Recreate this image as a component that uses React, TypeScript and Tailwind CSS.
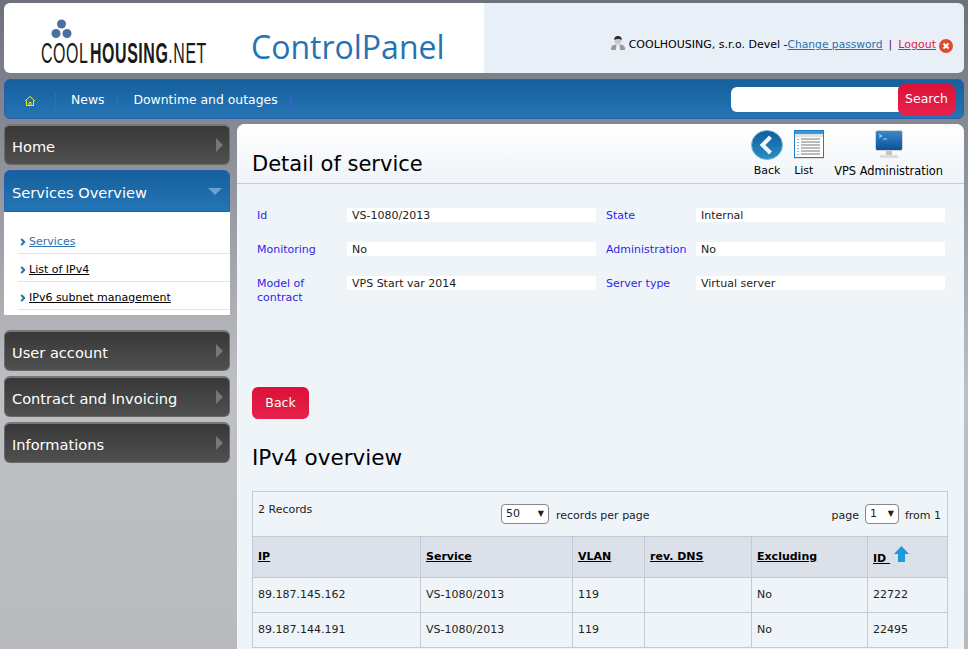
import { ChevronRight } from 'lucide-react';

const font = "font-['DejaVu_Sans',sans-serif]";

function Logo() {
  return (
    <div className="relative w-[170px] h-[46px]">
      <svg className="absolute left-[10px] -top-[1px]" width="24" height="24" viewBox="0 0 24 24">
        <circle cx="10.5" cy="5" r="4.5" fill="#4a6fa5" />
        <circle cx="5" cy="14.5" r="4.5" fill="#4a6fa5" />
        <circle cx="16" cy="14.5" r="4.5" fill="#4a6fa5" />
      </svg>
      <div className="absolute left-0 top-[18px] flex items-baseline whitespace-nowrap origin-left scale-x-[0.55] font-['Liberation_Sans',sans-serif] text-[29px] leading-[30px] text-[#1a1a1a] tracking-[1px]">
        <span>COOL</span>
        <span className="font-bold ml-[3px]">HOUSING</span>
        <span>.NET</span>
      </div>
    </div>
  );
}

function MenuButton({ label }: { label: string }) {
  return (
    <div className="h-[41px] rounded-md border border-[#6a6a6a] border-t-2 border-t-[#777] bg-gradient-to-b from-[#383838] to-[#505050] flex items-center justify-between pl-[7px] pr-[6px] text-white text-[14.6px]">
      <span className="mt-[4px]">{label}</span>
      <span className="w-0 h-0 border-y-[7px] border-y-transparent border-l-[7px] border-l-[#777]" />
    </div>
  );
}

function SubLink({ label, active }: { label: string; active?: boolean }) {
  return (
    <div className="h-[28px] ml-[14px] pt-[5px] border-b border-[#e0e3ea] flex items-center gap-[1px] text-[11px]">
      <ChevronRight size={10} strokeWidth={5} className="text-[#2a72ad] shrink-0" />
      <span className={active ? 'underline text-[#2a72ad]' : 'underline text-black'}>{label}</span>
    </div>
  );
}

function Field({ label, value }: { label: string; value: string }) {
  return (
    <div className="flex items-start">
      <div className="w-[95px] shrink-0 pl-[5px] pr-2 pt-[1px] text-[11px] leading-[14px] text-[#2f1fe8]">{label}</div>
      <div className="w-[249px] h-[14px] bg-white pl-[5px] text-[11px] leading-[16px] text-[#222]">{value}</div>
    </div>
  );
}

function Th({ label, width }: { label: string; width: string }) {
  return (
    <th className={`${width} border border-[#c3c9d6] px-[5px] text-left text-[11px] font-bold underline text-black`}>
      {label}
    </th>
  );
}

function Row({ ip, id }: { ip: string; id: string }) {
  const td = 'border border-[#c3c9d6] px-[5px] text-[11px] text-[#222]';
  return (
    <tr className="h-[35px]">
      <td className={td}>{ip}</td>
      <td className={td}>VS-1080/2013</td>
      <td className={td}>119</td>
      <td className={td}></td>
      <td className={td}>No</td>
      <td className={td}>{id}</td>
    </tr>
  );
}

export default function App() {
  return (
    <div className={`${font} h-[649px] w-[968px] overflow-hidden bg-gradient-to-b from-[#6c717c] via-[#bfc0c4] via-60% to-[#b9babd] pt-[3px] px-[4px]`}>
      {/* Header */}
      <header className="h-[70px] flex rounded-md overflow-hidden">
        <div className="w-[480px] bg-white flex items-start pl-[37px] pt-[17px]">
          <Logo />
          <div className="ml-[40px] mt-[7px] text-[#2573b5] text-[32px] leading-[40px] font-['Open_Sans',sans-serif]">ControlPanel</div>
        </div>
        <div className="flex-1 bg-[#e8eff7] flex items-center justify-end gap-[3px] pr-[11px] pt-[15px] text-[11px]">
          <svg width="14" height="16" viewBox="0 0 14 16" className="mb-[5px]">
            <path d="M0 15c0-4 1-5.500 7-5.500s7 1.500 7 5.500z" fill="#9a9a9a" />
            <path d="M5.500 9.500h3l.5 5.500H5z" fill="#f2f2f2" />
            <circle cx="7" cy="5.500" r="3.500" fill="#c8c8c8" />
            <path d="M3.300 5C3 2 5 1 7 1s4 1 3.700 4C9.500 3.500 4.500 3.500 3.300 5z" fill="#2c2c2c" />
          </svg>
          <span className="text-black ml-[1px]">COOLHOUSING, s.r.o. Devel -</span>
          <span className="underline text-[#2a72ad] text-[10.7px] -ml-[3px]">Change password</span>
          <span className="text-[#601060] mx-[3px]">|</span>
          <span className="underline text-[#e01c44]">Logout</span>
          <svg width="14" height="14" viewBox="0 0 14 14">
            <circle cx="7" cy="7" r="7" fill="#dd4b30" />
            <path d="M4.500 4.500l5 5M9.500 4.500l-5 5" stroke="#fff" strokeWidth="2" />
          </svg>
        </div>
      </header>

      {/* Top nav */}
      <nav className="mt-[6px] h-[40px] rounded-md border border-[#2a5fb0] bg-gradient-to-b from-[#15609d] to-[#2575b5] flex items-center text-white text-[12.4px]">
        <div className="w-[51px] mt-[3px] flex justify-center h-[16px] items-center border-r border-[#3b66cc]">
          <svg width="12" height="12" viewBox="0 0 12 12" fill="none" stroke="#ffee00" strokeWidth="1">
            <path d="M1 6l5-4.500 5 4.500M2.500 5.500v5h7v-5M5 10.500v-3h2v3" />
          </svg>
        </div>
        <div className="pl-[15px] pr-[13px] mt-[3px] h-[16px] flex items-center border-r border-[#3b66cc]">News</div>
        <div className="pl-[15px] pr-[12px] mt-[3px] h-[16px] flex items-center border-r border-[#3b66cc]">Downtime and outages</div>
        <div className="ml-auto flex items-center mr-[8px]">
          <div className="w-[170px] h-[25px] bg-white rounded-l-md -mr-[3px]" />
          <button className="relative w-[57px] h-[31px] rounded-md bg-gradient-to-b from-[#db1038] to-[#e7214a] text-white text-[12.5px]">Search</button>
        </div>
      </nav>

      <div className="mt-[5px] flex gap-[7px] items-start">
        {/* Sidebar */}
        <aside className="w-[226px] shrink-0 flex flex-col">
          <MenuButton label="Home" />
          <div className="mt-[5px] h-[42px] rounded-t-md border border-[#2a5fb0] bg-gradient-to-b from-[#15609d] to-[#2575b5] flex items-center justify-between pl-[7px] pr-[7px] text-white text-[14.6px]">
            <span className="mt-[4px]">Services Overview</span>
            <span className="w-0 h-0 border-x-[7px] border-x-transparent border-t-[7px] border-t-[#6ba0cf]" />
          </div>
          <div className="bg-white h-[103px] pt-[14px]">
            <SubLink label="Services" active />
            <SubLink label="List of IPv4" />
            <SubLink label="IPv6 subnet management" />
          </div>
          <div className="mt-[15px] flex flex-col gap-[5px]">
            <MenuButton label="User account" />
            <MenuButton label="Contract and Invoicing" />
            <MenuButton label="Informations" />
          </div>
        </aside>

        {/* Main */}
        <main className="w-[727px] h-[525px] rounded-t-lg bg-[#eff4f9] overflow-hidden">
          <div className="h-[60px] border-b border-[#c5cad6] bg-gradient-to-b from-white to-[#eff4f9] flex items-end justify-between pl-[15px] pr-[21px]">
            <h1 className="text-[21px] leading-[32px] text-black mb-[3px]">Detail of service</h1>
            <div className="flex items-end text-[11px] text-black leading-[14px] mb-[5px]">
              <div className="w-[32px] flex flex-col items-center gap-[4px]">
                <svg width="32" height="30" viewBox="0 0 32 30">
                  <defs>
                    <linearGradient id="backFill" x1="0" y1="0" x2="0" y2="1">
                      <stop offset="0" stopColor="#0b5d9c" />
                      <stop offset="1" stopColor="#2b8fc6" />
                    </linearGradient>
                  </defs>
                  <ellipse cx="16" cy="15" rx="15.500" ry="14.500" fill="url(#backFill)" stroke="#7fb2d2" strokeWidth="1" />
                  <path d="M19.500 7l-8 8 8 8" fill="none" stroke="#f2f8fc" strokeWidth="4" />
                </svg>
                <span>Back</span>
              </div>
              <div className="ml-[11px] w-[30px] flex flex-col items-start gap-[4px]">
                <svg width="30" height="30" viewBox="0 0 30 30">
                  <rect x="0" y="1" width="30" height="28" fill="#ccc" opacity=".5" />
                  <rect x=".5" y=".5" width="29" height="27" fill="#fff" stroke="#1e7fc0" />
                  <rect x="1" y="1" width="28" height="3" fill="#3f97d8" />
                  <rect x="1" y="4" width="28" height="3" fill="#dfe3e6" />
                  <path d="M7 9h19M7 12h19M7 15h19M7 18h19M7 21h19M7 24h19" stroke="#777" />
                  <path d="M4 9v16" stroke="#1e6fa8" strokeDasharray="1 2" />
                </svg>
                <span>List</span>
              </div>
              <div className="ml-[10px] flex flex-col items-center gap-[4px] text-[11.4px]">
                <svg width="30" height="30" viewBox="0 0 30 30">
                  <defs>
                    <linearGradient id="vpsFill" x1="0" y1="0" x2="0" y2="1">
                      <stop offset="0" stopColor="#3a8ccc" />
                      <stop offset="1" stopColor="#0b4f94" />
                    </linearGradient>
                  </defs>
                  <rect x="1.500" y="0.500" width="27" height="20" rx="2" fill="url(#vpsFill)" stroke="#d5d5d5" />
                  <path d="M5 4.500l3 1.500-3 1.500M9 9h4" stroke="#e0f0ff" fill="none" strokeWidth=".8" />
                  <rect x="12" y="21" width="6" height="4" fill="#c4c4c4" />
                  <rect x="6" y="25" width="18" height="3" rx="1" fill="#dcdcdc" />
                </svg>
                <span>VPS Administration</span>
              </div>
            </div>
          </div>

          <div className="px-[15px]">
            <div className="mt-[24px] grid grid-cols-[344px_344px] gap-x-[5px] gap-y-[19px]">
              <Field label="Id" value="VS-1080/2013" />
              <Field label="State" value="Internal" />
              <Field label="Monitoring" value="No" />
              <Field label="Administration" value="No" />
              <Field label="Model of contract" value="VPS Start var 2014" />
              <Field label="Server type" value="Virtual server" />
            </div>

            <button className="mt-[82px] block w-[57px] h-[32px] rounded-md bg-gradient-to-b from-[#db1038] to-[#e7214a] text-white text-[12.5px]">Back</button>

            <h2 className="mt-[23px] text-[21.5px] leading-[32px] text-black">IPv4 overview</h2>

            <div className="mt-[17px] w-[696px] h-[45px] border border-[#c3c9d6] border-b-0 flex text-[11px] text-[#222]">
              <div className="w-[248px] pl-[5px] pt-[10px]">2 Records</div>
              <div className="flex items-start pt-[12px] gap-[7px]">
                <div className="w-[48px] h-[20px] bg-white border border-[#888] rounded-sm flex items-center justify-between px-[4px]">
                  <span>50</span>
                  <span className="text-[8px]">▼</span>
                </div>
                <span className="mt-[4px]">records per page</span>
              </div>
              <div className="ml-auto flex items-start pt-[12px] gap-[6px] pr-[6px]">
                <span className="mt-[4px]">page</span>
                <div className="w-[34px] h-[20px] bg-white border border-[#888] rounded-sm flex items-center justify-between px-[4px]">
                  <span>1</span>
                  <span className="text-[8px]">▼</span>
                </div>
                <span className="mt-[4px]">from 1</span>
              </div>
            </div>

            <table className="w-[696px] table-fixed border-collapse">
              <thead>
                <tr className="h-[41px] bg-[#dce0e8]">
                  <Th label="IP" width="w-[168px]" />
                  <Th label="Service" width="w-[152px]" />
                  <Th label="VLAN" width="w-[72px]" />
                  <Th label="rev. DNS" width="w-[107px]" />
                  <Th label="Excluding" width="w-[116px]" />
                  <th className="border border-[#c3c9d6] px-[5px] text-left text-[11px] font-bold text-black">
                    <span className="inline-flex items-start gap-[4px]">
                      <span className="underline mt-[5px]">ID&nbsp;</span>
                      <svg width="15" height="16" viewBox="0 0 15 16">
                        <path d="M7.500 0L15 8h-4v8H4V8H0z" fill="#1b9ade" />
                      </svg>
                    </span>
                  </th>
                </tr>
              </thead>
              <tbody>
                <Row ip="89.187.145.162" id="22722" />
                <Row ip="89.187.144.191" id="22495" />
              </tbody>
            </table>
          </div>
        </main>
      </div>
    </div>
  );
}
